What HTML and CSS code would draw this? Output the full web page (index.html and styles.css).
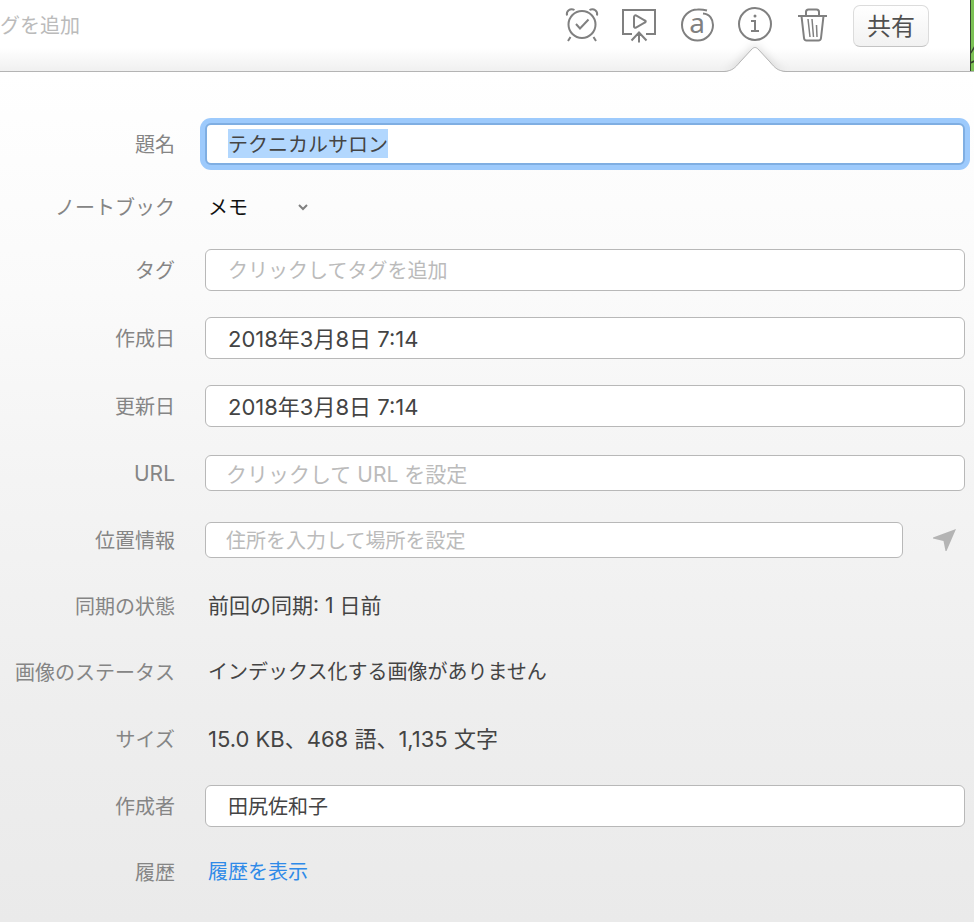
FILE: index.html
```html
<!DOCTYPE html>
<html lang="ja">
<head>
<meta charset="utf-8">
<meta name="viewport" content="width=device-width, initial-scale=1">
<title>ノート情報</title>
<link rel="stylesheet" href="styles.css">
</head>
<body>
<header class="toolbar">
  <button class="add-tag" type="button">グを追加</button>
  <nav class="actions" aria-label="ノートの操作">
    <button class="icon" type="button" aria-label="リマインダー">
      <svg viewBox="0 0 34 40"><circle cx="18" cy="21.500" r="13.500"/><path d="M12 21l4 4.500 8.500-9M6.500 34l-2.500 4M29.500 34l2.500 4M3 12.500c-1-4 3-8 7.500-5.500M33 12.500c1-4-3-8-7.500-5.500"/></svg>
    </button>
    <button class="icon" type="button" aria-label="プレゼンテーション">
      <svg viewBox="0 0 34 40"><path d="M10 31H1V7h32v24h-9M12 14v9.500c0 1 1 1.500 2 1l9-5c1-.5 1-1.500 0-2l-9-5c-1-.5-2 .5-2 1.500zM17 39.500V30M9.500 37.500l7.500-8 7.500 8"/></svg>
    </button>
    <button class="icon" type="button" aria-label="ワークチャット">
      <svg viewBox="0 0 34 40"><path d="M23 10.500C30 11 33 16.500 33 22A15.500 15.500 0 1 1 17.500 6.500c3.500-.3 6.500.2 9.500 1"/><text x="17" y="30" font-family="Noto Sans" font-size="28">a</text></svg>
    </button>
    <span class="active-item">
      <button class="icon" type="button" aria-label="情報" aria-expanded="true">
        <svg viewBox="0 0 34 40"><circle cx="17" cy="21" r="16"/><path d="M13 18h4v10M13 28h8"/><circle class="dot" cx="17" cy="13" r="1.500"/></svg>
      </button>
      <svg class="pointer" viewBox="0 0 62 26" aria-hidden="true"><path class="fill" d="M0 26C8 25 11 22 16 16L28 3c2-2 4-2 6 0l12 13c5 6 8 9 16 10z"/><path class="edge" d="M0 25.500C8 25 11 22 16 16L28 3c2-2 4-2 6 0l12 13c5 6 8 9 16 9.500"/></svg>
    </span>
    <button class="icon" type="button" aria-label="削除">
      <svg viewBox="0 0 34 40"><path d="M2 13h29M10 13V9c0-1.500 1-2.500 2.500-2.500h8C22 6.500 23 7.500 23 9v4M5.500 13l2.500 22c.2 2 1 2.500 2.500 2.500h12c1.500 0 2.300-.5 2.500-2.500l2.500-22"/><path class="fine" d="M12 16l2 18M16 16l1.500 18M20.500 22l.5 12"/></svg>
    </button>
    <button class="share" type="button">共有</button>
  </nav>
  <svg class="backdrop" viewBox="0 0 4 72" preserveAspectRatio="none" aria-hidden="true"><path class="leaf" d="M0 0h4v72H0z"/><path class="vein" d="M0 0h1v72H0zM0 54l4-7v3l-4 6zM0 63l4-2v2l-4 2z"/></svg>
</header>
<main class="panel">
  <form class="info">
    <div class="row">
      <label for="title">題名</label>
      <input class="field focused" id="title" type="text" value="テクニカルサロン">
    </div>
    <div class="row compact">
      <label for="notebook">ノートブック</label>
      <span class="picker">
        <select id="notebook"><option>メモ</option></select>
        <svg viewBox="0 0 12 8" aria-hidden="true"><path d="M2 2l4 4 4-4"/></svg>
      </span>
    </div>
    <div class="row">
      <label for="tags">タグ</label>
      <input class="field empty" id="tags" type="text" placeholder="クリックしてタグを追加">
    </div>
    <div class="row">
      <label for="created">作成日</label>
      <input class="field figures" id="created" type="text" value="2018年3月8日 7:14">
    </div>
    <div class="row">
      <label for="updated">更新日</label>
      <input class="field figures" id="updated" type="text" value="2018年3月8日 7:14">
    </div>
    <div class="row medium">
      <label class="mixed" for="url">URL</label>
      <input class="field short empty mixed" id="url" type="text" placeholder="クリックして URL を設定">
    </div>
    <div class="row">
      <label for="place">位置情報</label>
      <span class="place">
        <input class="field short empty" id="place" type="text" placeholder="住所を入力して場所を設定">
        <button class="locate" type="button" aria-label="現在地"><svg viewBox="0 0 24 24"><path d="M23 1L0 9.500v1l10.500 2.500L12.500 23h1z"/></svg></button>
      </span>
    </div>
    <div class="row tight">
      <span class="label">同期の状態</span>
      <span class="value mixed">前回の同期: 1 日前</span>
    </div>
    <div class="row">
      <span class="label">画像のステータス</span>
      <span class="value">インデックス化する画像がありません</span>
    </div>
    <div class="row medium">
      <span class="label">サイズ</span>
      <span class="value figures">15.0 KB、468 語、1,135 文字</span>
    </div>
    <div class="row">
      <label for="author">作成者</label>
      <input class="field" id="author" type="text" value="田尻佐和子">
    </div>
    <div class="row tight">
      <span class="label">履歴</span>
      <a class="value" href="#history">履歴を表示</a>
    </div>
  </form>
</main>
<script src="script.js"></script>
</body>
</html>
```
FILE: styles.css
```css
* { box-sizing: border-box; }

body {
  margin: 0;
  min-height: 100vh;
  display: flex;
  flex-direction: column;
  background: #fff;
  color: #444;
  font: 20px/28px Inter, "Noto Sans CJK JP", sans-serif;
}

button, input, select { font: inherit; color: inherit; margin: 0; }
button { padding: 0; border: 0; background: none; }

.toolbar {
  display: flex;
  justify-content: space-between;
  height: 71px;
  background: linear-gradient(#fff 48px, #f0f0f0);
}

.add-tag { align-self: flex-start; margin-top: 12px; color: #bbb; }
.actions { display: flex; align-items: flex-start; gap: 24px; margin-left: auto; margin-right: 41px; }
.icon { display: block; width: 34px; height: 40px; margin-top: 3px; }
.icon svg { display: block; width: 34px; height: 40px; fill: none; stroke: #808080; stroke-width: 2; overflow: visible; }
.icon text { fill: #808080; stroke: none; text-anchor: middle; }
.icon .dot { fill: #808080; stroke: none; }
.icon .fine { stroke-width: 1.5; }
.active-item { position: relative; }
.pointer {
  position: absolute;
  top: 46px;
  left: 50%;
  width: 62px;
  height: 26px;
  transform: translateX(-50%);
  z-index: 2;
  filter: drop-shadow(0 -2px 4px rgba(0, 0, 0, .12));
  clip-path: inset(-20px -20px 0);
}
.pointer .fill { fill: #fff; }
.pointer .edge { fill: none; stroke: #b4b4b4; }

.share {
  width: 76px;
  height: 42px;
  margin-top: 5px;
  margin-left: -1px;
  padding-top: 2px;
  border: 1px solid #dcdcdc;
  border-bottom-color: #c4c4c4;
  border-radius: 7px;
  background: linear-gradient(#fff, #f2f2f2);
  font-size: 24px;
  color: #505050;
}

.backdrop { width: 4px; height: 71px; }
.backdrop .leaf { fill: #7cc255; }
.backdrop .vein { fill: #35422f; }

.panel {
  flex: 1;
  padding: 38px 9px 16px 0;
  border-top: 1px solid #b4b4b4;
  background: linear-gradient(#fff, #fafafa 26%, #f4f4f4 48%, #eee 75%, #eaeaea);
}

.row { display: grid; grid-template-columns: 175px 1fr; column-gap: 30px; align-items: center; min-height: 68px; }
.row.medium { min-height: 66px; }
.row.tight { min-height: 64px; }
.row.compact { min-height: 58px; }
label, .label { padding-top: 2px; text-align: right; white-space: nowrap; color: #858585; }
.value { padding-left: 3px; }
a { justify-self: start; color: #2f8ae8; text-decoration: none; }

.field {
  width: 100%;
  height: 42px;
  min-width: 0;
  padding: 0 22px 2px;
  border: 1px solid #b8b8b8;
  border-radius: 6px;
  background: #fff;
  outline: 0;
}
.field.empty { padding-top: 2px; padding-bottom: 0; }
.field.short { height: 36px; padding-left: 20px; padding-right: 20px; }
.mixed { font-size: 21px; }
.figures { font-size: 22px; }
.field::placeholder { color: #bbb; opacity: 1; }
.focused { border: 2px solid #7faee2; padding-left: 21px; box-shadow: 0 0 0 5px #9dcafc; caret-color: transparent; }
.focused::selection { background: #b2d7fe; color: #444; }

.picker { display: flex; align-items: center; color: #111; }
.picker select { width: 90px; padding: 2px 0 0 3px; border: 0; background: none; appearance: none; outline: 0; }
.picker svg { width: 12px; height: 8px; margin-left: 2px; fill: none; stroke: #808080; stroke-width: 2; pointer-events: none; }

.place { display: flex; align-items: center; }
.place .field { flex: 1; }
.locate { width: 24px; height: 24px; margin: 0 8px 0 30px; }
.locate svg { display: block; fill: #b4b4b4; }
```
FILE: script.js
```js
const title = document.getElementById("title");
title.focus();
title.select();
```
